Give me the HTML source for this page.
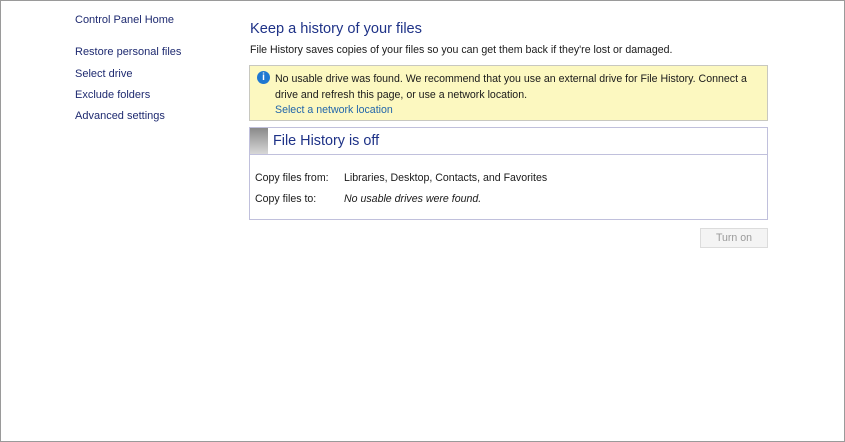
<!DOCTYPE html>
<html><head><style>
body{margin:0;width:845px;height:442px;background:#fff;font-family:"Liberation Sans",sans-serif;font-size:10.6px;color:#1a1a1a;position:relative;overflow:hidden}
.frame{position:absolute;left:0;top:0;width:843px;height:440px;border:1px solid #9a9a9a}
.a{position:absolute;white-space:nowrap}
.nav{color:#1e2a70;font-size:11px}
</style></head><body>
<div class="frame"></div>
<div class="a nav" style="left:75px;top:14px">Control Panel Home</div>
<div class="a nav" style="left:75px;top:46px">Restore personal files</div>
<div class="a nav" style="left:75px;top:68px">Select drive</div>
<div class="a nav" style="left:75px;top:89px">Exclude folders</div>
<div class="a nav" style="left:75px;top:110px">Advanced settings</div>
<div class="a" style="left:250px;top:21px;font-size:14.6px;color:#1e3287">Keep a history of your files</div>
<div class="a" style="left:250px;top:44px">File History saves copies of your files so you can get them back if they're lost or damaged.</div>
<div class="a" style="left:249px;top:65px;width:517px;height:54px;background:#fcf8c0;border:1px solid #c8c8c0"></div>
<div class="a" style="left:257px;top:71px;width:13px;height:13px;border-radius:50%;background:#1f78d1;color:#fff;font-size:10px;font-weight:bold;text-align:center;line-height:13px">i</div>
<div class="a" style="left:275px;top:71px;line-height:16px;width:488px;overflow:hidden">No usable drive was found. We recommend that you use an external drive for File History. Connect a<br>drive and refresh this page, or use a network location.</div>
<div class="a" style="left:275px;top:104px;color:#2266aa">Select a network location</div>
<div class="a" style="left:249px;top:127px;width:517px;height:91px;border:1px solid #c0c0dc"></div>
<div class="a" style="left:250px;top:128px;width:517px;height:26px;border-bottom:1px solid #c0c0dc"></div>
<div class="a" style="left:250px;top:128px;width:18px;height:26px;background:linear-gradient(#8a8a8a,#d8d8d8)"></div>
<div class="a" style="left:273px;top:133px;font-size:14.4px;color:#1e3287">File History is off</div>
<div class="a" style="left:255px;top:172px">Copy files from:</div>
<div class="a" style="left:344px;top:172px">Libraries, Desktop, Contacts, and Favorites</div>
<div class="a" style="left:255px;top:193px">Copy files to:</div>
<div class="a" style="left:344px;top:193px;font-style:italic">No usable drives were found.</div>
<div class="a" style="left:700px;top:228px;width:66px;height:18px;border:1px solid #dcdcdc;background:#f4f4f4;color:#9a9a9a;text-align:center;line-height:18px">Turn on</div>
</body></html>
